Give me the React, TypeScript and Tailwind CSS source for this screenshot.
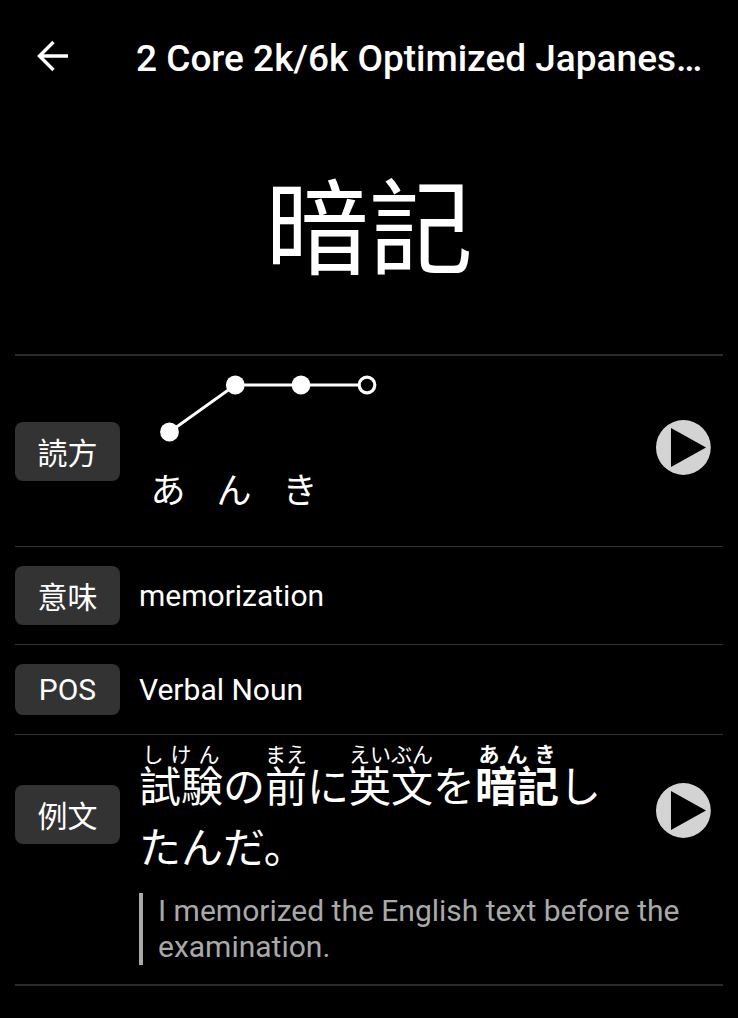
import type { ReactNode } from "react";

function Chip({ children }: { children: ReactNode }) {
  return (
    <dt className="w-[105px] shrink-0 rounded-lg bg-[#333333] pt-2.5 pb-1.5 text-center leading-[43px]">
      {children}
    </dt>
  );
}

function PlayButton({ label }: { label: string }) {
  return (
    <button type="button" aria-label={label} className="mr-3 shrink-0">
      <svg viewBox="0 0 56 56" className="block size-14" aria-hidden="true">
        <circle cx="28.4" cy="27.5" r="27.4" fill="#d3d3d3" />
        <path d="M16 8 L51 27.5 L16 47 Z" fill="#000" />
      </svg>
    </button>
  );
}

function PitchGraph() {
  return (
    <svg
      viewBox="0 0 264 92"
      className="block h-[92px] w-[264px]"
      role="img"
      aria-label="Pitch accent"
    >
      <path
        d="M34.5 62 L100.3 15 H232"
        fill="none"
        stroke="#fff"
        strokeWidth="2.8"
      />
      <circle cx="34.5" cy="62" r="9.4" fill="#fff" />
      <circle cx="100.3" cy="15" r="9.4" fill="#fff" />
      <circle cx="166" cy="15" r="9.4" fill="#fff" />
      <circle cx="232" cy="15" r="7.8" fill="#000" stroke="#fff" strokeWidth="3.2" />
    </svg>
  );
}

export default function App() {
  return (
    <div
      lang="zh-CN"
      className="min-h-screen bg-black font-[Roboto,'Noto_Sans_CJK_SC',sans-serif] text-[30px] leading-[normal] text-white"
    >
      <header className="flex h-28 items-center pr-6 pl-9">
        <button type="button" aria-label="Back" className="mr-16 shrink-0">
          <svg viewBox="0 0 36 36" className="block size-9" aria-hidden="true">
            <path
              d="M32 18 H4 M17.5 4 L3.5 18 L17.5 32"
              fill="none"
              stroke="#fff"
              strokeWidth="3.4"
            />
          </svg>
        </button>
        <h1 className="min-w-0 flex-1 truncate pt-1 text-[37px] font-medium">
          2 Core 2k/6k Optimized Japanes…
        </h1>
      </header>

      <main className="px-[15px]">
        <div className="flex h-[244px] justify-center border-b-2 border-[#2b2b2b] pt-[34px]">
          <p className="text-[104px]">暗記</p>
        </div>

        <dl>
          <div className="flex h-[191px] items-center border-b border-[#333333]">
            <Chip>読方</Chip>
            <dd className="flex flex-1 items-start justify-between pl-[15px]">
              <div>
                <PitchGraph />
                <div className="flex pb-5 text-[35px]">
                  <span className="w-[66px] text-center">あ</span>
                  <span className="w-[66px] text-center">ん</span>
                  <span className="w-[66px] text-center">き</span>
                </div>
              </div>
              <div className="pt-[50px]">
                <PlayButton label="Play word" />
              </div>
            </dd>
          </div>

          <div className="flex items-center border-b border-[#333333] py-[19px]">
            <Chip>意味</Chip>
            <dd className="pl-[19px]">memorization</dd>
          </div>

          <div className="flex items-center border-b border-[#333333] py-[19px]">
            <dt className="w-[105px] shrink-0 rounded-lg bg-[#333333] py-2 text-center">
              POS
            </dt>
            <dd className="pl-[19px]">Verbal Noun</dd>
          </div>

          <div className="flex items-start border-b-2 border-[#2b2b2b] pb-[19px]">
            <div className="pt-[50px]">
              <Chip>例文</Chip>
            </div>
            <dd className="min-w-0 flex-1 pl-[19px]">
              <div className="flex items-start">
                <p className="min-w-0 flex-1 pt-[18px] pr-12 text-[42px]">
                  <ruby>試験<rt>しけん</rt></ruby>の
                  <ruby>前<rt>まえ</rt></ruby>に
                  <ruby>英文<rt>えいぶん</rt></ruby>を
                  <b>
                    <ruby>暗記<rt>あんき</rt></ruby>
                  </b>
                  したんだ。
                </p>
                <div className="pt-12">
                  <PlayButton label="Play sentence" />
                </div>
              </div>
              <blockquote className="mt-[18px] border-l-4 border-[#a9a9a9] pl-[15px] leading-9 text-[#a9a9a9]">
                I memorized the English text before the examination.
              </blockquote>
            </dd>
          </div>
        </dl>
      </main>
    </div>
  );
}
